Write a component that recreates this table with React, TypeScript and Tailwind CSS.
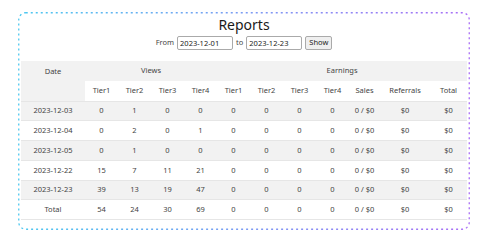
const rows = [
  { date: '2023-12-03', views: [0, 1, 0, 0] },
  { date: '2023-12-04', views: [0, 2, 0, 1] },
  { date: '2023-12-05', views: [0, 1, 0, 0] },
  { date: '2023-12-22', views: [15, 7, 11, 21] },
  { date: '2023-12-23', views: [39, 13, 19, 47] },
  { date: 'Total', views: [54, 24, 30, 69] },
]

function DottedBorder() {
  return (
    <svg className="absolute inset-0 pointer-events-none" width="452" height="218" viewBox="0 0 452 218">
      <defs>
        <linearGradient id="edge" x1="0" y1="0" x2="1" y2="0">
          <stop offset="0" stopColor="#4cc8f0" />
          <stop offset="1" stopColor="#a96ef6" />
        </linearGradient>
      </defs>
      <rect x="0.75" y="0.75" width="450.5" height="216.5" rx="7" fill="none" stroke="url(#edge)" strokeWidth="1.3" strokeDasharray="2 3" />
    </svg>
  )
}

export default function App() {
  return (
    <div className="w-[500px] h-[245px] bg-white font-['Noto_Sans',sans-serif] text-[#444]">
      <div className="relative ml-[18px] top-[12px] w-[452px] h-[218px] px-[3px] pt-[5px]">
        <DottedBorder />
        <h1 className="text-center text-[14px] leading-[16px] text-[#1a1a1a]">Reports</h1>
        <div className="mt-[3px] flex items-center justify-center gap-[3px] text-[7.5px]">
          <span>From</span>
          <input
            readOnly
            value="2023-12-01"
            className="w-[56px] h-[14px] border border-[#aaa] rounded-[2px] px-[2px] text-[7.5px] text-[#222]"
          />
          <span>to</span>
          <input
            readOnly
            value="2023-12-23"
            className="w-[56px] h-[14px] border border-[#aaa] rounded-[2px] px-[2px] text-[7.5px] text-[#222]"
          />
          <button className="h-[14px] px-[3px] bg-[#efefef] border border-[#aaa] rounded-[2px] text-[7.5px] text-[#222]">
            Show
          </button>
        </div>
        <table className="mt-[11px] w-[446px] table-fixed border-collapse text-[7.5px] text-center">
          <colgroup>
            <col className="w-[64px]" />
            {Array.from({ length: 8 }).map((_, i) => (
              <col key={i} className="w-[33px]" />
            ))}
            <col className="w-[31px]" />
            <col className="w-[50px]" />
            <col className="w-[37px]" />
          </colgroup>
          <thead>
            <tr className="h-[20px] bg-[#f2f2f2]">
              <th rowSpan={2} className="font-normal align-top pt-[5px]">Date</th>
              <th colSpan={4} className="font-normal">Views</th>
              <th colSpan={7} className="font-normal">Earnings</th>
            </tr>
            <tr className="h-[20px] border-b border-[#e6e6e6]">
              {['Tier1', 'Tier2', 'Tier3', 'Tier4', 'Tier1', 'Tier2', 'Tier3', 'Tier4', 'Sales', 'Referrals', 'Total'].map((h, i) => (
                <th key={i} className="font-normal">{h}</th>
              ))}
            </tr>
          </thead>
          <tbody>
            {rows.map((r, i) => (
              <tr key={r.date} className={`h-[19.8px] border-b border-[#e6e6e6] ${i % 2 === 0 ? 'bg-[#f2f2f2]' : 'bg-white'}`}>
                <td>{r.date}</td>
                {r.views.map((v, j) => (
                  <td key={j}>{v}</td>
                ))}
                <td>0</td>
                <td>0</td>
                <td>0</td>
                <td>0</td>
                <td>0 / $0</td>
                <td>$0</td>
                <td>$0</td>
              </tr>
            ))}
          </tbody>
        </table>
      </div>
    </div>
  )
}
